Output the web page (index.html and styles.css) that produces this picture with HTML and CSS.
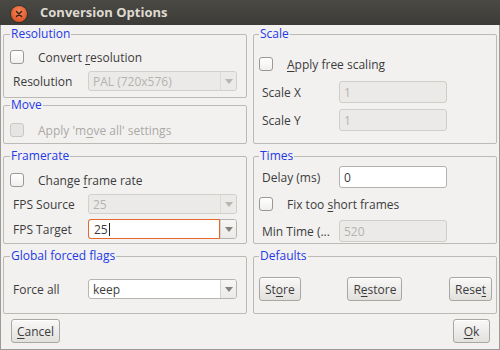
FILE: index.html
```html
<!DOCTYPE html>
<html lang="en">
<head>
    <meta charset="UTF-8">
    <meta name="viewport" content="width=device-width, initial-scale=1.0">
    <title>Conversion Options</title>
    <link rel="stylesheet" href="styles.css">
</head>
<body>
    <div class="window">
        <div class="titlebar">
            <span class="close-btn">
                <svg width="16" height="16" viewBox="0 0 16 16">
                    <path d="M5.5 5.5 L10.5 10.5 M10.5 5.5 L5.5 10.5" stroke="#3a2418" stroke-width="1.5" stroke-linecap="round"/>
                </svg>
            </span>
            <span class="title">Conversion Options</span>
        </div>

        <div class="content">
            <div class="groups">
                <div class="stack">
                    <fieldset class="group group-resolution">
                        <legend>Resolution</legend>
                        <div class="check-row"><span class="checkbox"></span><span>Convert <u>r</u>esolution</span></div>
                        <div class="field-row">
                            <span class="field-label">Resolution</span>
                            <div class="combo disabled">
                                <span class="combo-text">PAL (720x576)</span>
                                <span class="combo-arrow"></span>
                            </div>
                        </div>
                    </fieldset>

                    <fieldset class="group group-move">
                        <legend>Move</legend>
                        <div class="check-row disabled"><span class="checkbox"></span><span>Apply 'm<u>o</u>ve all' settings</span></div>
                    </fieldset>
                </div>

                <fieldset class="group side group-scale">
                    <legend>Scale</legend>
                    <div class="check-row"><span class="checkbox"></span><span><u>A</u>pply free scaling</span></div>
                    <div class="field-row tall">
                        <span class="field-label">Scale X</span>
                        <div class="line-edit disabled">1</div>
                    </div>
                    <div class="field-row tall">
                        <span class="field-label">Scale Y</span>
                        <div class="line-edit disabled">1</div>
                    </div>
                </fieldset>

                <fieldset class="group group-framerate">
                    <legend>Framerate</legend>
                    <div class="check-row"><span class="checkbox"></span><span>Change <u>f</u>rame rate</span></div>
                    <div class="field-row">
                        <span class="field-label">FPS Source</span>
                        <div class="combo disabled">
                            <span class="combo-text">25</span>
                            <span class="combo-arrow"></span>
                        </div>
                    </div>
                    <div class="field-row">
                        <span class="field-label">FPS Target</span>
                        <div class="combo focus">
                            <span class="combo-text">25<span class="caret"></span></span>
                            <span class="combo-arrow"></span>
                        </div>
                    </div>
                </fieldset>

                <fieldset class="group side group-times">
                    <legend>Times</legend>
                    <div class="field-row tall">
                        <span class="field-label">Delay (ms)</span>
                        <div class="line-edit">0</div>
                    </div>
                    <div class="check-row"><span class="checkbox"></span><span>Fix too <u>s</u>hort frames</span></div>
                    <div class="field-row tall">
                        <span class="field-label">Min Time (...</span>
                        <div class="line-edit disabled">520</div>
                    </div>
                </fieldset>

                <fieldset class="group group-flags">
                    <legend>Global forced flags</legend>
                    <div class="field-row">
                        <span class="field-label">Force all</span>
                        <div class="combo">
                            <span class="combo-text">keep</span>
                            <span class="combo-arrow"></span>
                        </div>
                    </div>
                </fieldset>

                <fieldset class="group side group-defaults">
                    <legend>Defaults</legend>
                    <div class="button-row">
                        <button class="btn">St<u>o</u>re</button>
                        <button class="btn">R<u>e</u>store</button>
                        <button class="btn">Rese<u>t</u></button>
                    </div>
                </fieldset>
            </div>

            <div class="actions">
                <button class="btn"><u>C</u>ancel</button>
                <button class="btn btn-ok"><u>O</u>k</button>
            </div>
        </div>
    </div>
</body>
</html>
```

FILE: styles.css
```css
/* === Base === */
* {
    box-sizing: border-box;
}

body {
    margin: 0;
    font-family: "Open Sans", "DejaVu Sans", sans-serif;
    font-size: 12px;
    color: #3c3c3c;
    background: #f2f1f0;
}

u {
    text-decoration: underline;
    text-underline-offset: 2px;
}

.window {
    width: 500px;
    height: 350px;
    display: flex;
    flex-direction: column;
}

/* === Title bar === */
.titlebar {
    height: 25px;
    flex-shrink: 0;
    display: flex;
    align-items: flex-start;
    background: linear-gradient(#4a4944, #3c3b37);
}

.close-btn {
    width: 16px;
    height: 16px;
    margin: 6px 13px 0 11px;
    border-radius: 50%;
    background: radial-gradient(circle at 50% 35%, #f58a5c, #e0582a 70%, #b8441d);
    box-shadow: 0 0 0 1px rgba(0, 0, 0, 0.25);
    display: flex;
}

.title {
    margin-top: 4px;
    line-height: 16px;
    font-size: 13px;
    font-weight: bold;
    color: #dfdbd2;
}

/* === Dialog body === */
.content {
    flex: 1;
    display: flex;
    flex-direction: column;
    padding: 2px 2px 0 2px;
    border: 1px solid #9d9b97;
    border-top: none;
}

.groups {
    display: grid;
    grid-template-columns: 244px 244px;
    grid-template-rows: 117px 95px 65px;
    column-gap: 6px;
    row-gap: 5px;
}

.stack {
    display: flex;
    flex-direction: column;
}

/* === Group boxes === */
.group {
    margin: 0;
    min-width: 0;
    padding: 0 9px 0 6px;
    border: 1px solid #bcbab5;
    border-radius: 2px;
    display: flex;
    flex-direction: column;
}

.group.side {
    padding-left: 5px;
}

.group legend {
    padding: 0 1px;
    line-height: 14px;
    color: #2439e6;
}

.group-resolution {
    height: 71px;
    padding-top: 5px;
}

.group-resolution .check-row {
    margin-bottom: 3px;
}

.group-move {
    flex: 1;
    padding-top: 7px;
}

.group-scale {
    padding-top: 12px;
    gap: 6px;
}

.group-framerate {
    padding-top: 6px;
    gap: 5px;
}

.group-framerate .check-row {
    margin-bottom: -2px;
}

.group-times {
    padding-top: 3px;
    gap: 5px;
}

.group-flags {
    padding-top: 16px;
}

.group-defaults {
    padding: 14px 4px 0 4px;
}

/* === Rows === */
.check-row {
    height: 22px;
    display: flex;
    align-items: center;
}

.check-row.disabled {
    color: #aba9a5;
}

.checkbox {
    width: 14px;
    height: 14px;
    flex-shrink: 0;
    margin-right: 14px;
    border: 1px solid #9b9995;
    border-radius: 3px;
    background: linear-gradient(#ffffff, #f0efee);
}

.check-row.disabled .checkbox {
    border-color: #cac8c4;
    background: #e6e5e3;
}

.field-row {
    height: 20px;
    display: flex;
    align-items: center;
}

.field-row.tall {
    height: 22px;
}

.field-label {
    width: 78px;
    flex-shrink: 0;
    padding-left: 3px;
}

.side .field-label {
    width: 80px;
}

/* === Inputs === */
.combo {
    flex: 1;
    height: 20px;
    display: flex;
    border: 1px solid #b7b5b0;
    border-radius: 3px;
    background: #ffffff;
}

.combo-text {
    flex: 1;
    display: flex;
    align-items: center;
    padding-left: 4px;
}

.combo-arrow {
    width: 16px;
    display: flex;
    align-items: center;
    justify-content: center;
    border-left: 1px solid #d5d3cf;
    border-radius: 0 2px 2px 0;
    background: linear-gradient(#f7f6f5, #ebeae8);
}

.combo-arrow::after {
    content: "";
    border-left: 4px solid transparent;
    border-right: 4px solid transparent;
    border-top: 5px solid #85837f;
}

.combo.disabled {
    border-color: #d2d0cb;
    background: #ebeae8;
    color: #b5b3af;
}

.combo.disabled .combo-arrow {
    background: #ebeae8;
    border-left-color: #dcdad6;
}

.combo.disabled .combo-arrow::after {
    border-top-color: #b8b6b2;
}

.combo.focus .combo-text {
    margin: -1px 0 -1px -1px;
    padding-left: 5px;
    border: 1px solid #e8672f;
    border-radius: 3px 0 0 3px;
}

.caret {
    width: 1px;
    height: 13px;
    margin-left: 1px;
    background: #222222;
}

.line-edit {
    width: 108px;
    height: 22px;
    display: flex;
    align-items: center;
    padding-left: 4px;
    border: 1px solid #b3b1ac;
    border-radius: 3px;
    background: #ffffff;
}

.line-edit.disabled {
    border-color: #d0cec9;
    background: #ebeae8;
    color: #b5b3af;
}

/* === Buttons === */
.button-row {
    display: flex;
    justify-content: space-between;
}

.btn {
    height: 24px;
    padding: 0 5px;
    font: inherit;
    color: #3c3c3c;
    border: 1px solid #a9a7a2;
    border-radius: 3px;
    background: linear-gradient(#f9f8f7, #e3e1de);
    box-shadow: inset 0 1px 0 #ffffff;
}

.btn-ok {
    width: 37px;
}

.actions {
    margin-top: 5px;
    padding: 0 7px 0 8px;
    display: flex;
    justify-content: space-between;
}
```
